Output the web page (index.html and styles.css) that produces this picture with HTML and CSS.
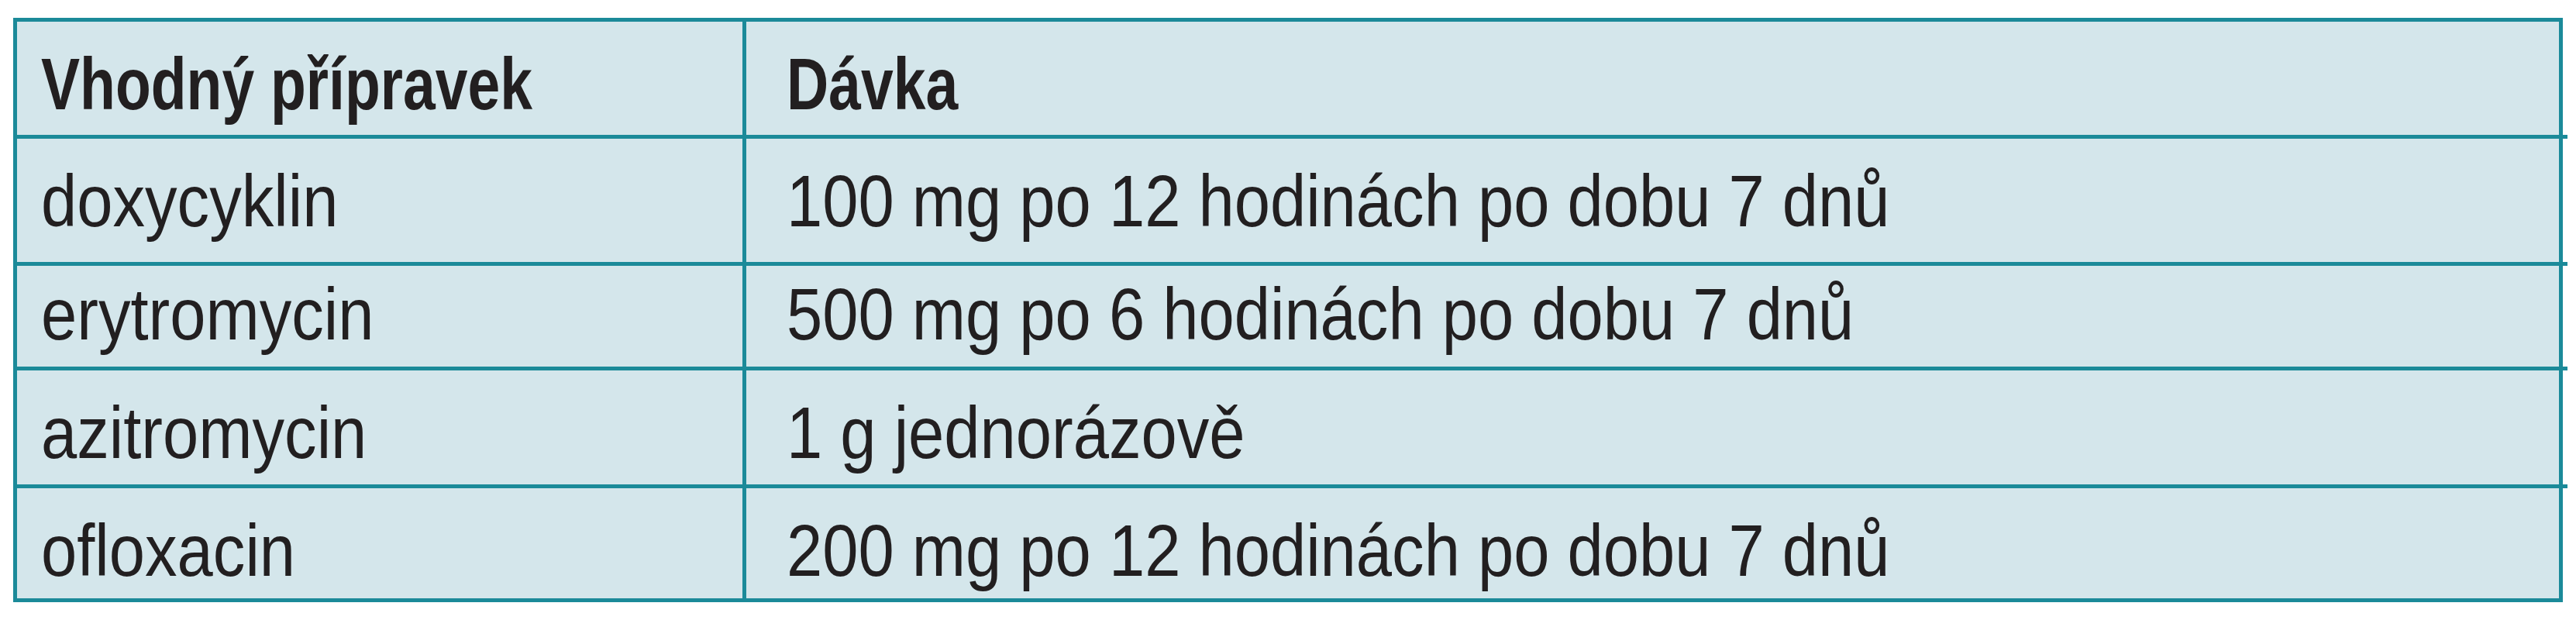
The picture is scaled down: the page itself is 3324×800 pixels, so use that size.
FILE: index.html
```html
<!DOCTYPE html>
<html lang="cs">
<head>
<meta charset="utf-8">
<title>Léčba</title>
<link rel="stylesheet" href="styles.css">
</head>
<body>
<div class="wrap">
  <div class="grid">
    <div class="cell head c1"><span class="txt">Vhodný přípravek</span></div>
    <div class="cell head c2"><span class="txt">Dávka</span></div>
    <div class="cell r1 c1"><span class="txt">doxycyklin</span></div>
    <div class="cell r1 c2"><span class="txt">100 mg po 12 hodinách po dobu 7 dnů</span></div>
    <div class="cell r2 c1"><span class="txt">erytromycin</span></div>
    <div class="cell r2 c2"><span class="txt">500 mg po 6 hodinách po dobu 7 dnů</span></div>
    <div class="cell r3 c1"><span class="txt">azitromycin</span></div>
    <div class="cell r3 c2"><span class="txt">1 g jednorázově</span></div>
    <div class="cell r4 c1"><span class="txt">ofloxacin</span></div>
    <div class="cell r4 c2"><span class="txt">200 mg po 12 hodinách po dobu 7 dnů</span></div>
  </div>
</div>
</body>
</html>
```
FILE: styles.css
```css
html, body {
  margin: 0;
  padding: 0;
  background: #ffffff;
}
.wrap {
  padding: 23px 0 0 17px;
}
.grid {
  display: grid;
  width: 3290px;
  box-sizing: border-box;
  grid-template-columns: 936px 2339px;
  grid-template-rows: 146px 159px 130px 147px 142px;
  gap: 5px;
  padding: 5px;
  background: #1b8a99;
  font-family: "Liberation Sans", Arial, sans-serif;
  font-size: 95px;
  line-height: 95px;
  color: #221f20;
}
.cell {
  position: relative;
  background: #d4e6eb;
  box-sizing: border-box;
  padding-top: 33px;
  white-space: nowrap;
}
.txt {
  display: inline-block;
  transform-origin: 0 50%;
  transform: scaleX(0.875);
}
.c1 { padding-left: 31px; }
.c2 { padding-left: 52px; }
.head {
  font-weight: 700;
}
.head .txt {
  transform: scaleX(0.79);
}
.r2 { padding-top: 15px; }
.r1.c2::after, .r2.c2::after, .r3.c2::after, .head.c2::after {
  content: "";
  position: absolute;
  right: -11px;
  bottom: -5px;
  width: 6px;
  height: 5px;
  background: #1b8a99;
}
.r4.c1::after {
  content: "";
  position: absolute;
  right: -5px;
  bottom: -11px;
  width: 5px;
  height: 6px;
  background: #1b8a99;
}
```
